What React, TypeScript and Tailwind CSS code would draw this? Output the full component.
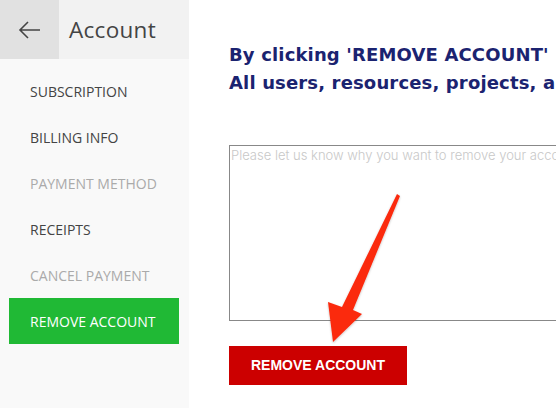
import React from "react";

export default function App() {
  const items = [
    { label: "SUBSCRIPTION", muted: false },
    { label: "BILLING INFO", muted: false },
    { label: "PAYMENT METHOD", muted: true },
    { label: "RECEIPTS", muted: false },
    { label: "CANCEL PAYMENT", muted: true },
  ];
  return (
    <div className="relative flex h-[408px] w-[556px] overflow-hidden bg-white">
      <aside className="flex w-[189px] shrink-0 flex-col bg-[#f9f9f9]" style={{ fontFamily: '"Open Sans", sans-serif' }}>
        <div className="flex h-[59px] items-center bg-[#f2f2f2]">
          <div className="flex h-full w-[59px] items-center justify-center bg-[#e1e1e1]">
            <svg width="24" height="20" viewBox="0 0 24 20" fill="none" stroke="#444" strokeWidth="1.6">
              <path d="M22 10H2M10 2L2 10l8 8" />
            </svg>
          </div>
          <span className="pl-[10px] text-[22.5px] tracking-[0.3px] text-[#444]">Account</span>
        </div>
        <nav className="flex flex-col pt-[9px]">
          {items.map((it) => (
            <div
              key={it.label}
              className={`flex h-[46px] items-center pl-[30px] text-[14px] ${it.muted ? "text-[#aaa]" : "text-[#444]"}`}
            >
              {it.label}
            </div>
          ))}
          <div className="ml-[9px] flex h-[46px] w-[170px] items-center bg-[#20b935] pl-[21px] text-[14px] text-white">
            REMOVE ACCOUNT
          </div>
        </nav>
      </aside>
      <main className="flex min-w-0 flex-1 flex-col overflow-hidden pl-[40px] pt-[41px]">
        <div
          className="whitespace-nowrap text-[18px] font-bold leading-[28px] tracking-[0.15px] text-[#1b2370]"
          style={{ fontFamily: '"DejaVu Sans", sans-serif' }}
        >
          <div>By clicking 'REMOVE ACCOUNT'</div>
          <div>All users, resources, projects, and</div>
        </div>
        <textarea
          className="mt-[48px] h-[176px] w-[400px] shrink-0 resize-none border border-[#888] px-[1px] text-[13px] font-light placeholder:text-[#c8c8c8]"
          style={{ fontFamily: 'Inter, sans-serif' }}
          placeholder="Please let us know why you want to remove your account"
        />
        <button
          className="mt-[25px] flex h-[39px] w-[178px] shrink-0 items-center justify-center bg-[#cc0000] text-[14px] font-bold text-white"
          style={{ fontFamily: '"Liberation Sans", Arial, sans-serif' }}
        >
          REMOVE ACCOUNT
        </button>
      </main>
      <svg className="pointer-events-none absolute left-0 top-0" width="556" height="408">
        <defs>
          <filter id="sh" x="-20%" y="-20%" width="140%" height="140%">
            <feDropShadow dx="0" dy="1" stdDeviation="1.2" floodColor="#000" floodOpacity="0.25" />
          </filter>
        </defs>
        <polygon
          filter="url(#sh)"
          fill="#fb2a0f"
          points="397,194 400,196 353,310 362,314 333,342 328,302 342,307"
        />
      </svg>
    </div>
  );
}
